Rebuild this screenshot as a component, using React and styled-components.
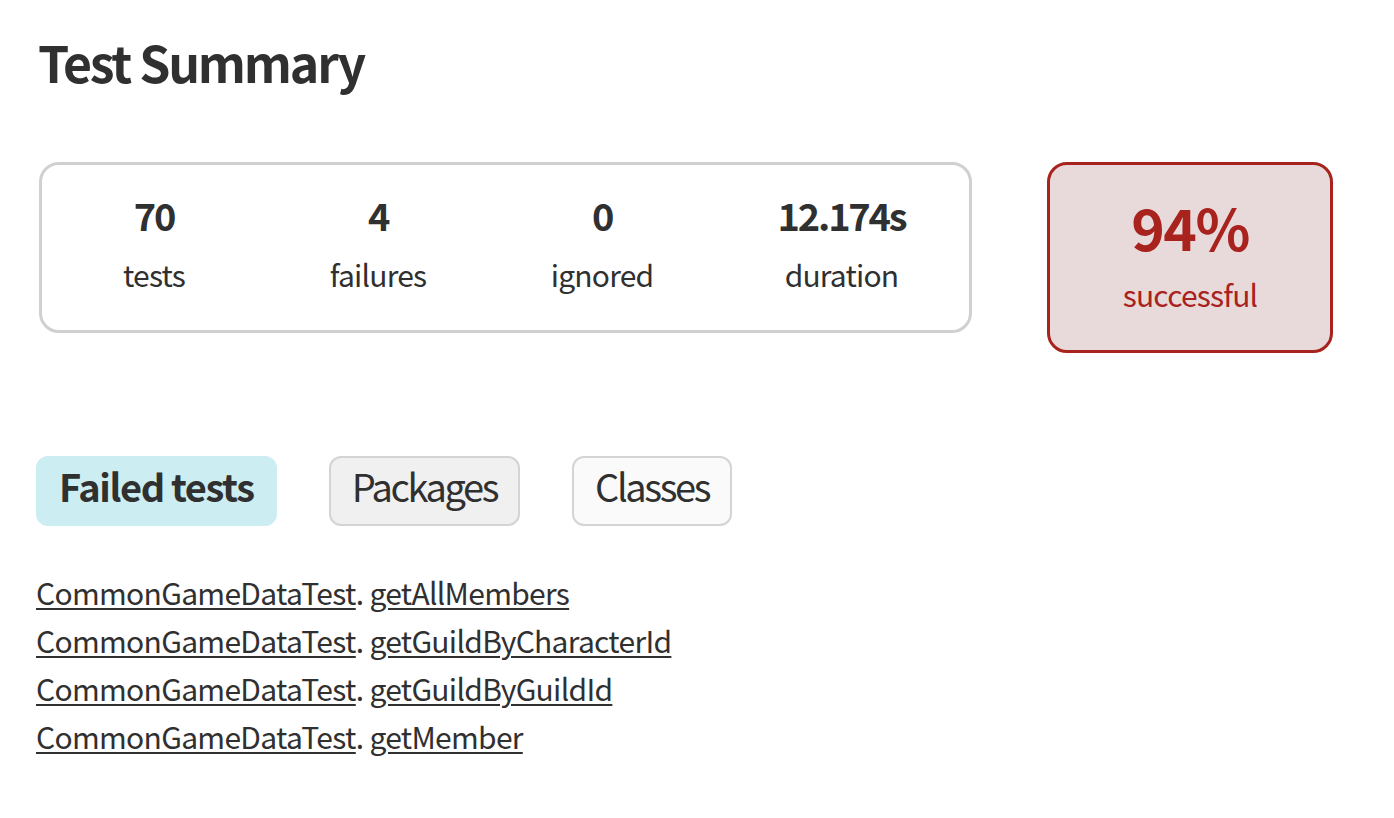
import styled, { createGlobalStyle } from 'styled-components';

const GlobalStyle = createGlobalStyle`
  body {
    margin: 0;
    background: #ffffff;
    color: #303030;
    font-family: "Noto Sans CJK KR", "Noto Sans", sans-serif;
  }
`;

const Content = styled.div`
  padding: 23px 36px 40px;
`;

const Title = styled.h1`
  margin: 0 0 0 2px;
  font-size: 50px;
  line-height: 76px;
  font-weight: 700;
  letter-spacing: -2.2px;
`;

const SummaryRow = styled.div`
  display: flex;
  align-items: flex-start;
  margin: 63px 0 0 3px;
`;

const SummaryGroup = styled.div`
  box-sizing: border-box;
  width: 933px;
  height: 171px;
  border: 3px solid #d0d0d0;
  border-radius: 20px;
  display: grid;
  grid-template-columns: 224px 224px 224px 1fr;
`;

const InfoBox = styled.div`
  padding-top: 25px;
  text-align: center;
`;

const Counter = styled.p`
  margin: 0 0 10px;
  font-size: 38px;
  line-height: 50px;
  font-weight: 700;
  letter-spacing: -2.2px;
`;

const Label = styled.p`
  margin: 0;
  font-size: 30px;
  line-height: 48px;
  letter-spacing: -0.8px;
`;

const SuccessRate = styled.div`
  box-sizing: border-box;
  width: 286px;
  height: 191px;
  margin-left: 75px;
  border: 3px solid #a8231d;
  border-radius: 20px;
  background: #e8dadb;
  color: #a8231d;
  text-align: center;
  padding-top: 25px;
`;

const Percent = styled.p`
  margin: 0 0 8px;
  font-size: 57px;
  line-height: 72px;
  font-weight: 700;
  letter-spacing: -1.5px;
`;

const Tabs = styled.ul`
  display: flex;
  gap: 52px;
  list-style: none;
  margin: 103px 0 0;
  padding: 0;
`;

const Tab = styled.li`
  box-sizing: border-box;
  height: 70px;
  padding: 0 21px;
  border-radius: 12px;
  border: 2px solid ${(p) => (p.$selected ? '#ccedf2' : '#d4d4d4')};
  background: ${(p) => (p.$selected ? '#ccedf2' : p.$hover ? '#fafafa' : '#f0f0f0')};
  font-size: 38px;
  line-height: 56px;
  font-weight: ${(p) => (p.$selected ? 700 : 400)};
  letter-spacing: ${(p) => (p.$selected ? '-1.4px' : '-2.4px')};
`;

const TestList = styled.ul`
  list-style: none;
  margin: 42px 0 0;
  padding: 0;
`;

const TestItem = styled.li`
  font-size: 30px;
  line-height: 48px;
  letter-spacing: -0.7px;
`;

const Link = styled.a`
  color: #303030;
  text-decoration: underline;
  text-underline-offset: 3px;
  text-decoration-thickness: 2px;
`;

const counters = [
  { value: '70', label: 'tests' },
  { value: '4', label: 'failures' },
  { value: '0', label: 'ignored' },
  { value: '12.174s', label: 'duration' },
];

const failedTests = ['getAllMembers', 'getGuildByCharacterId', 'getGuildByGuildId', 'getMember'];

export default function App() {
  return (
    <>
      <GlobalStyle />
      <Content>
        <Title>Test Summary</Title>
        <SummaryRow>
          <SummaryGroup>
            {counters.map((c) => (
              <InfoBox key={c.label}>
                <Counter>{c.value}</Counter>
                <Label>{c.label}</Label>
              </InfoBox>
            ))}
          </SummaryGroup>
          <SuccessRate>
            <Percent>94%</Percent>
            <Label>successful</Label>
          </SuccessRate>
        </SummaryRow>
        <Tabs>
          <Tab $selected>Failed tests</Tab>
          <Tab>Packages</Tab>
          <Tab $hover>Classes</Tab>
        </Tabs>
        <TestList>
          {failedTests.map((t) => (
            <TestItem key={t}>
              <Link href="#">CommonGameDataTest</Link>. <Link href="#">{t}</Link>
            </TestItem>
          ))}
        </TestList>
      </Content>
    </>
  );
}
